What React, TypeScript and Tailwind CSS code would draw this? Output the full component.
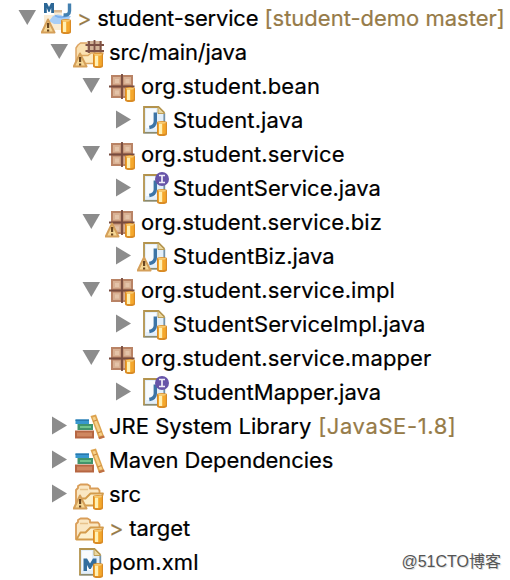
import { ReactNode } from 'react';
import clsx from 'clsx';

type IconType = 'project' | 'sourceFolder' | 'package' | 'java' | 'interface' | 'library' | 'folder' | 'pom';

interface TreeItem {
  level: number;
  icon: IconType;
  label: string;
  arrow?: 'open' | 'closed';
  warning?: boolean;
  dirty?: boolean;
  suffix?: string;
  tracking?: string;
  suffixTracking?: string;
}

const items: TreeItem[] = [
  { level: 0, icon: 'project', label: 'student-service', arrow: 'open', warning: true, dirty: true, suffix: '[student-demo master]', tracking: 'tracking-[-0.2px]' },
  { level: 1, icon: 'sourceFolder', label: 'src/main/java', arrow: 'open', warning: true, tracking: 'tracking-[-0.15px]' },
  { level: 2, icon: 'package', label: 'org.student.bean', arrow: 'open', tracking: 'tracking-[0.1px]' },
  { level: 3, icon: 'java', label: 'Student.java', arrow: 'closed', tracking: 'tracking-[0.12px]' },
  { level: 2, icon: 'package', label: 'org.student.service', arrow: 'open', tracking: 'tracking-[0.1px]' },
  { level: 3, icon: 'interface', label: 'StudentService.java', arrow: 'closed' },
  { level: 2, icon: 'package', label: 'org.student.service.biz', arrow: 'open', warning: true, tracking: 'tracking-[0.08px]' },
  { level: 3, icon: 'java', label: 'StudentBiz.java', arrow: 'closed', warning: true, tracking: 'tracking-[0.05px]' },
  { level: 2, icon: 'package', label: 'org.student.service.impl', arrow: 'open', tracking: 'tracking-[0.1px]' },
  { level: 3, icon: 'java', label: 'StudentServiceImpl.java', arrow: 'closed', tracking: 'tracking-[0.03px]' },
  { level: 2, icon: 'package', label: 'org.student.service.mapper', arrow: 'open', tracking: 'tracking-[0.1px]' },
  { level: 3, icon: 'interface', label: 'StudentMapper.java', arrow: 'closed' },
  { level: 1, icon: 'library', label: 'JRE System Library', arrow: 'closed', suffix: '[JavaSE-1.8]', suffixTracking: 'tracking-[0.6px]' },
  { level: 1, icon: 'library', label: 'Maven Dependencies', arrow: 'closed', tracking: 'tracking-[-0.06px]' },
  { level: 1, icon: 'folder', label: 'src', arrow: 'closed', warning: true },
  { level: 1, icon: 'folder', label: 'target', dirty: true },
  { level: 1, icon: 'pom', label: 'pom.xml', tracking: 'tracking-[0.1px]' },
];

const indents = ['pl-[18px]', 'pl-[50px]', 'pl-[82px]', 'pl-[114px]'];

function Arrow({ state }: { state?: 'open' | 'closed' }) {
  return (
    <svg viewBox="0 0 18 32" className="w-[18px] h-8 shrink-0" fill="#8c8c8c">
      {state === 'open' && <path d="M.5 8h17.500L9.300 23z" />}
      {state === 'closed' && <path d="M2 6.500v18l15-9z" />}
    </svg>
  );
}

// Repository cylinder in the lower right corner
function Cylinder() {
  return (
    <g>
      <path d="M20 18.500q0-1.500 5-1.500t5 1.500v11.500q0 2-5 2t-5-2z" fill="#d98b25" />
      <path d="M21.200 19.500h7.600v10q-3.800 1.500-7.600 0z" fill="#f5a82c" />
      <path d="M22 19.500h3.200v10.500h-3.200z" fill="#fff0b4" />
      <ellipse cx="25" cy="18.800" rx="4" ry="1" fill="#f8ca70" />
    </g>
  );
}

function Warning() {
  return (
    <g>
      <path d="M7 17.500L13.500 30.500H.8z" fill="#f6d795" stroke="#d5a05a" strokeWidth="2" strokeLinejoin="round" />
      <path d="M6 21h2.200v5H6zM6 27.500h2.200v2H6z" fill="#68451f" />
    </g>
  );
}

function Page({ children }: { children?: ReactNode }) {
  return (
    <g>
      <path d="M7 3h14.500l6 6v20H7z" fill="#e3effa" />
      <path d="M9 5h10v19H9z" fill="#f8fbfe" />
      <path d="M27.300 9v20" stroke="#7392a9" strokeWidth="1.800" />
      <path d="M6.200 28.800h21.500" stroke="#8b8b70" strokeWidth="1.800" />
      <path d="M7 29V3h14.500l6 6" fill="none" stroke="#b3934d" strokeWidth="1.800" />
      <path d="M21 3v6.500h6.500z" fill="#ead7a0" stroke="#bd9f58" />
      {children}
    </g>
  );
}

function JavaMark() {
  return <path d="M18.300 8.500v9q0 5-6 6" fill="none" stroke="#3c74a6" strokeWidth="3.400" />;
}

function Folder() {
  return (
    <g strokeLinejoin="round">
      <path d="M3 27V12l2-2V8l2.500-1.500h7L17 8v2.500h8l1.500 2V27z" fill="#fae7c3" stroke="#d99d58" strokeWidth="1.800" />
      <path d="M3.500 27.500l4-7h5l5-5H30l-4 12z" fill="#fdf0cd" stroke="#d39b4b" strokeWidth="1.800" />
      <path d="M7 11.500h8" stroke="#e7c28a" strokeWidth="1.500" />
    </g>
  );
}

function TreeIcon({ type, warning }: { type: IconType; warning?: boolean }) {
  return (
    <svg viewBox="0 0 32 32" className="w-8 h-8 shrink-0 ml-[5px]">
      {type === 'project' && (
        <g>
          <path d="M3 13h10v-3h8v5h8l-3 13H3z" fill="#faecd4" />
          <path d="M12 14q5-3 10 0h8l-5 8H13l-5-3z" fill="#a9cef6" />
          <path d="M14 13.500q6 3.500 14 0" fill="none" stroke="#7db1ee" strokeWidth="1.800" />
          <path d="M13 8h8v2.500h-8z" fill="#d9b995" />
          <path d="M3 1h3l2 4 2-4h3v10h-2.800V6L8.500 10h-1L5.800 6v5H3z" fill="#2c6796" />
          <path d="M28.500 1.500v7.500q0 4.500-6 4" fill="none" stroke="#4380b0" strokeWidth="3.400" />
        </g>
      )}
      {type === 'sourceFolder' && (
        <g strokeLinejoin="round">
          <path d="M3 27V12l2-3 2.500-2h7L17 9h10v18z" fill="#fae0b1" stroke="#dda564" strokeWidth="1.500" />
          <path d="M14 5h15v12H14z" fill="#d3b398" />
          <path d="M12.500 9H31M12.500 15H31M16 5v12M21.500 4v13M27.500 5v12" stroke="#7d5145" strokeWidth="1.800" />
          <path d="M4 27.500l4-8h7l3-2.500h12l-4 10.500z" fill="#fce9bf" stroke="#dda760" strokeWidth="1.500" />
        </g>
      )}
      {type === 'package' && (
        <g>
          <path d="M6 5h22v23H6z" fill="#b98365" />
          <path d="M8 7h7.500v7.500H8zM18.500 7H26v7.500h-7.500zM8 18.500h7.500V26H8zM18.500 18.500H26V26h-7.500z" fill="#d8b093" />
          <path d="M10 9h4v4h-4zM20.500 9h4v4h-4zM10 20.500h4v4h-4z" fill="#e4c3a8" />
          <path d="M17 4v25M4 16.500h25.500" stroke="#764b3e" strokeWidth="1.800" />
        </g>
      )}
      {type === 'java' && <Page><JavaMark /></Page>}
      {type === 'interface' && (
        <g>
          <Page><JavaMark /></Page>
          <circle cx="25" cy="7" r="7" fill="#6754a8" />
          <path d="M22 3.500h6M25 3.500v7M22 10.500h6" stroke="#f0edf8" strokeWidth="1.700" />
        </g>
      )}
      {type === 'library' && (
        <g>
          <path d="M2.500 9.500h13.500v4.500H2.500z" fill="#3797cf" />
          <path d="M2.500 9.500h13.500v1.500H2.500z" fill="#2878ad" />
          <path d="M4.500 14H20v6H4.500z" fill="#41946c" />
          <path d="M7 16h11v2H7z" fill="#70c48d" />
          <path d="M2 20.500h19v8H2z" fill="#b66642" />
          <path d="M4 22.500h15v4H4z" fill="#cf8760" />
          <path d="M17.500 6l5.500-1.500 8.500 23-5.500 1.500z" fill="#dda34f" />
          <path d="M19.500 7.500l2.500-.8 7.300 18.500-2.500.8z" fill="#f7d28b" />
          <path d="M20 11.500l4-1.500M24.500 23l4-1.500" stroke="#c9873d" strokeWidth="1.200" />
          <path d="M25.500 27l5.500-1.500.7 2-5.500 1.800z" fill="#bf7045" />
        </g>
      )}
      {type === 'folder' && <Folder />}
      {type === 'pom' && (
        <Page>
          <path d="M10.500 12.500h3.500l3 5 3-5h3.500V25H20v-6l-2.200 4h-1.600L14 19v6h-3.500z" fill="#336e9e" />
        </Page>
      )}
      {warning && <Warning />}
      {type !== 'library' && <Cylinder />}
    </svg>
  );
}

function TreeRow({ item }: { item: TreeItem }) {
  return (
    <div className={clsx('flex items-center h-[34px] whitespace-pre', indents[item.level])}>
      <Arrow state={item.arrow} />
      <TreeIcon type={item.icon} warning={item.warning} />
      <div className="ml-1 text-[22px] leading-[34px] [-webkit-text-stroke:0.2px]">
        {item.dirty && <span className="text-[#967b48] tracking-[-0.3px]">{'> '}</span>}
        <span className={item.tracking}>{item.label}</span>
        {item.suffix && <span className={clsx('text-[#967b48]', item.suffixTracking)}> {item.suffix}</span>}
      </div>
    </div>
  );
}

export default function App() {
  return (
    <div className="relative w-[510px] h-[580px] overflow-hidden bg-white pt-px text-black font-['Inter',sans-serif]">
      {items.map((item) => (
        <TreeRow key={item.label} item={item} />
      ))}
      <div className="absolute right-[9px] bottom-[6px] text-[16px] leading-6 text-[#555] [text-shadow:1px_1px_0_#ddd] font-['Liberation_Sans','Noto_Sans_CJK_SC',sans-serif]">
        @51CTO博客
      </div>
    </div>
  );
}
